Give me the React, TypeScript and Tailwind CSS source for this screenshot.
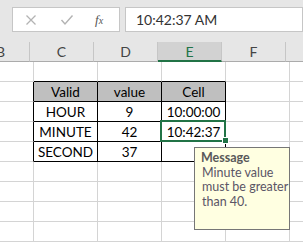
import React from 'react';

const font = { fontFamily: 'Lato, "Liberation Sans", sans-serif' };

const COLS = ['B', 'C', 'D', 'E', 'F', ''];
const WIDTHS = ['w-[34px]', 'w-[64px]', 'w-[64px]', 'w-[64px]', 'w-[64px]', 'w-[64px]'];

const rows: string[][] = [
  ['', '', '', '', '', ''],
  ['', 'Valid', 'value', 'Cell', '', ''],
  ['', 'HOUR', '9', '10:00:00', '', ''],
  ['', 'MINUTE', '42', '10:42:37', '', ''],
  ['', 'SECOND', '37', '', '', ''],
  ['', '', '', '', '', ''],
  ['', '', '', '', '', ''],
  ['', '', '', '', '', ''],
  ['', '', '', '', '', ''],
];

function inTable(r: number, c: number) {
  return r >= 1 && r <= 4 && c >= 1 && c <= 3;
}

function Cell({ r, c, text }: { r: number; c: number; text: string }) {
  const rightBlack = inTable(r, c) || (c === 0 && r >= 1 && r <= 4);
  const bottomBlack = inTable(r, c) || (r === 0 && c >= 1 && c <= 3);
  return (
    <div
      className={`h-[20px] shrink-0 border-r border-b flex items-end justify-center pb-[2px] text-[13.5px] text-black leading-none whitespace-nowrap ${WIDTHS[c]} ${
        rightBlack ? 'border-r-black' : 'border-r-[#d4d4d4]'
      } ${bottomBlack ? 'border-b-black' : 'border-b-[#d4d4d4]'} ${r === 1 && c >= 1 && c <= 3 ? 'bg-[#bfbfbf]' : 'bg-white'}`}
    >
      {text}
    </div>
  );
}

export default function App() {
  return (
    <div className="w-[303px] h-[244px] overflow-hidden bg-white relative" style={font}>
      {/* formula bar */}
      <div className="h-[42px] bg-[#e6e6e6] flex pt-[7px] pl-[12px] gap-[5px]">
        <div className="w-[108px] h-[25px] bg-white border border-[#c6c6c6] flex items-center">
          <svg width="12" height="12" viewBox="0 0 12 12" className="ml-[12px]">
            <path d="M1.5 1.5 L10.5 10.5 M10.5 1.5 L1.5 10.5" stroke="#b3b3b3" strokeWidth="1.3" fill="none" />
          </svg>
          <svg width="14" height="12" viewBox="0 0 14 12" className="ml-[23px]">
            <path d="M1.5 6 L5 10 L12.5 1.5" stroke="#b3b3b3" strokeWidth="1.4" fill="none" />
          </svg>
          <span
            className="ml-[21px] text-[13px] text-[#555] italic"
            style={{ fontFamily: '"Liberation Serif", serif' }}
          >
            f<span className="text-[10px]">x</span>
          </span>
        </div>
        <div className="flex-1 h-[25px] bg-white border border-[#c6c6c6] flex items-center pl-[10px] text-[14px] text-[#333]">
          10:42:37 AM
        </div>
      </div>

      {/* column headers */}
      <div className="flex h-[20px] bg-[#e6e6e6]">
        {COLS.map((c, i) => (
          <div
            key={i}
            className={`shrink-0 ${WIDTHS[i]} border-r border-r-[#c6c6c6] flex items-center text-[14px] ${
              c === 'E'
                ? 'bg-[#d2d2d2] text-[#217346] border-b-2 border-b-[#217346]'
                : 'text-[#444] border-b border-b-[#ababab]'
            } ${c === 'B' ? 'justify-start -ml-[4px]' : 'justify-center'}`}
          >
            {c}
          </div>
        ))}
      </div>

      {/* grid */}
      {rows.map((row, r) => (
        <div key={r} className="flex">
          {row.map((t, c) => (
            <Cell key={c} r={r} c={c} text={t} />
          ))}
        </div>
      ))}

      {/* selected cell */}
      <div className="absolute left-[160px] top-[120px] w-[66px] h-[22px] border-2 border-[#217346]" />
      <div className="absolute left-[222px] top-[137px] w-[7px] h-[7px] bg-[#217346] border border-white" />

      {/* input message */}
      <div className="absolute left-[194px] top-[147px] w-[96px] h-[83px] bg-[#ffffe1] border border-[#767676] pl-[6px] pt-[3px] text-[12.5px] leading-[14.5px] whitespace-nowrap">
        <div className="font-bold text-[#595959]">Message</div>
        <div className="text-[#5a5566] pl-[1px]">
          Minute value
          <br />
          must be greater
          <br />
          than 40.
        </div>
      </div>
    </div>
  );
}
